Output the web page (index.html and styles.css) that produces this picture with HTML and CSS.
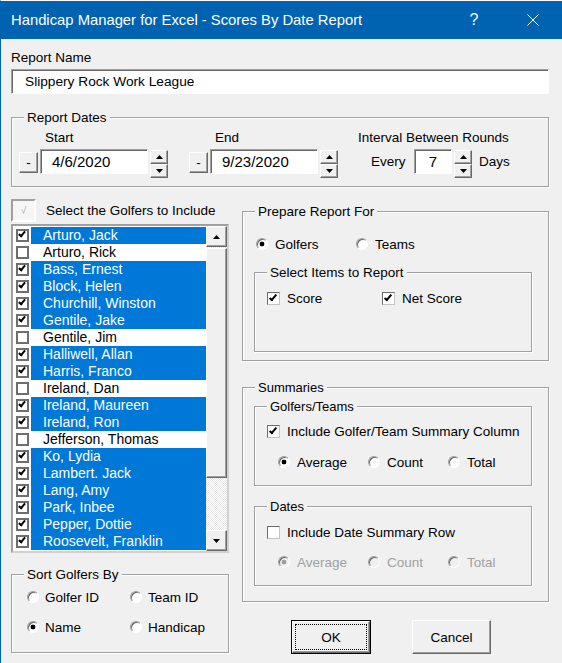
FILE: index.html
```html
<!DOCTYPE html>
<html lang="en">
<head>
    <meta charset="UTF-8">
    <title>Handicap Manager for Excel - Scores By Date Report</title>
    <link rel="stylesheet" href="styles.css">
</head>
<body>
<div class="window">
    <div class="titlebar">
        <span class="title">Handicap Manager for Excel - Scores By Date Report</span>
        <span class="help">?</span>
        <span class="close"><svg width="12" height="12" viewBox="0 0 12 12"><path d="M0.5 0.5L11.5 11.5M11.5 0.5L0.5 11.5" stroke="#fff" stroke-width="1"/></svg></span>
    </div>

    <div class="content">
        <div class="lbl">Report Name</div>
        <div class="textbox name-box">Slippery Rock Work League</div>

        <div class="group dates">
            <div class="group-title">Report Dates</div>
            <div class="dates-row">
                <div class="date-col">
                    <div class="col-lbl">Start</div>
                    <div class="ctl-row">
                        <span class="raised btn-min">-</span>
                        <span class="textbox date-box">4/6/2020</span>
                        <span class="spin">
                            <span class="raised spin-btn"><svg width="7" height="4" viewBox="0 0 7 4"><path d="M3.5 0L7 4H0z"/></svg></span>
                            <span class="raised spin-btn"><svg width="7" height="4" viewBox="0 0 7 4"><path d="M0 0H7L3.5 4z"/></svg></span>
                        </span>
                    </div>
                </div>
                <div class="date-col col-end">
                    <div class="col-lbl">End</div>
                    <div class="ctl-row">
                        <span class="raised btn-min">-</span>
                        <span class="textbox date-box">9/23/2020</span>
                        <span class="spin">
                            <span class="raised spin-btn"><svg width="7" height="4" viewBox="0 0 7 4"><path d="M3.5 0L7 4H0z"/></svg></span>
                            <span class="raised spin-btn"><svg width="7" height="4" viewBox="0 0 7 4"><path d="M0 0H7L3.5 4z"/></svg></span>
                        </span>
                    </div>
                </div>
                <div class="col-interval">
                    <div class="col-lbl">Interval Between Rounds</div>
                    <div class="ctl-row">
                        <span class="every">Every</span>
                        <span class="textbox num-box">7</span>
                        <span class="spin">
                            <span class="raised spin-btn"><svg width="7" height="4" viewBox="0 0 7 4"><path d="M3.5 0L7 4H0z"/></svg></span>
                            <span class="raised spin-btn"><svg width="7" height="4" viewBox="0 0 7 4"><path d="M0 0H7L3.5 4z"/></svg></span>
                        </span>
                        <span class="days">Days</span>
                    </div>
                </div>
            </div>
        </div>

        <div class="main">
            <div class="left">
                <div class="selall">
                    <span class="selall-box">&radic;</span>
                    <span class="selall-lbl">Select the Golfers to Include</span>
                </div>
                <div class="listbox">
                    <div class="items" id="golferList"></div>
                    <div class="scrollbar">
                        <div class="raised sb-btn"><svg width="7" height="4" viewBox="0 0 7 4"><path d="M3.5 0L7 4H0z"/></svg></div>
                        <div class="raised sb-thumb"></div>
                        <div class="sb-track"></div>
                        <div class="raised sb-btn"><svg width="7" height="4" viewBox="0 0 7 4"><path d="M0 0H7L3.5 4z"/></svg></div>
                    </div>
                </div>

                <div class="group sort">
                    <div class="group-title">Sort Golfers By</div>
                    <div class="radio-row sort-row1">
                        <span class="opt w103"><span class="radio"></span>Golfer ID</span>
                        <span class="opt"><span class="radio"></span>Team ID</span>
                    </div>
                    <div class="radio-row sort-row2">
                        <span class="opt w103"><span class="radio on"></span>Name</span>
                        <span class="opt"><span class="radio"></span>Handicap</span>
                    </div>
                </div>
            </div>

            <div class="right">
                <div class="group prepare">
                    <div class="group-title">Prepare Report For</div>
                    <div class="radio-row for-row">
                        <span class="opt w100"><span class="radio on"></span>Golfers</span>
                        <span class="opt"><span class="radio"></span>Teams</span>
                    </div>
                    <div class="group subgroup select-items">
                        <div class="group-title">Select Items to Report</div>
                        <div class="check-row">
                            <span class="opt w115"><span class="check on"></span>Score</span>
                            <span class="opt"><span class="check on"></span>Net Score</span>
                        </div>
                    </div>
                </div>

                <div class="group summaries">
                    <div class="group-title small">Summaries</div>
                    <div class="group subgroup gt">
                        <div class="group-title small">Golfers/Teams</div>
                        <div class="check-row">
                            <span class="opt"><span class="check on"></span>Include Golfer/Team Summary Column</span>
                        </div>
                        <div class="radio-row sum-radios">
                            <span class="opt w90"><span class="radio on"></span>Average</span>
                            <span class="opt w80"><span class="radio"></span>Count</span>
                            <span class="opt"><span class="radio"></span>Total</span>
                        </div>
                    </div>
                    <div class="group subgroup date-sum">
                        <div class="group-title small">Dates</div>
                        <div class="check-row">
                            <span class="opt"><span class="check"></span>Include Date Summary Row</span>
                        </div>
                        <div class="radio-row sum-radios disabled">
                            <span class="opt w90"><span class="radio dis on"></span>Average</span>
                            <span class="opt w80"><span class="radio dis"></span>Count</span>
                            <span class="opt"><span class="radio dis"></span>Total</span>
                        </div>
                    </div>
                </div>

                <div class="buttons">
                    <div class="btn btn-ok"><div class="raised btn-face"><span class="focus">OK</span></div></div>
                    <div class="raised btn btn-cancel">Cancel</div>
                </div>
            </div>
        </div>
    </div>
</div>

<script>
    var golfers = [
        ["Arturo, Jack", true], ["Arturo, Rick", false], ["Bass, Ernest", true],
        ["Block, Helen", true], ["Churchill, Winston", true], ["Gentile, Jake", true],
        ["Gentile, Jim", false], ["Halliwell, Allan", true], ["Harris, Franco", true],
        ["Ireland, Dan", false], ["Ireland, Maureen", true], ["Ireland, Ron", true],
        ["Jefferson, Thomas", false], ["Ko, Lydia", true], ["Lambert. Jack", true],
        ["Lang, Amy", true], ["Park, Inbee", true], ["Pepper, Dottie", true],
        ["Roosevelt, Franklin", true]
    ];

    var list = document.getElementById("golferList");
    golfers.forEach(function (g) {
        var row = `<div class="item${g[1] ? " on" : ""}">
            <span class="item-cb"><span class="list-check"></span></span>
            <span class="item-name">${g[0]}</span>
        </div>`;
        list.innerHTML += row;
    });
</script>
</body>
</html>
```

FILE: styles.css
```css
body {
    margin: 0;
    font-family: "Liberation Sans", Arial, sans-serif;
    font-size: 13.5px;
    color: #000;
    background: #f0f0f0;
}
.window {
    width: 562px;
    height: 663px;
    box-sizing: border-box;
    border-left: 1px solid #0063b1;
    border-top: 1px solid #fafafa;
    background: #f0f0f0;
    overflow: hidden;
}

/* title bar */
.titlebar {
    height: 38px;
    background: #0063b1;
    color: #fff;
    display: flex;
    align-items: center;
}
.title {
    padding-left: 10px;
    font-size: 14.8px;
}
.help {
    margin-left: auto;
    width: 46px;
    text-align: center;
    font-size: 16px;
}
.close {
    width: 46px;
    margin-left: 13px;
    margin-right: 6px;
    display: flex;
    justify-content: center;
}

.content {
    padding: 10px 13px 0 10px;
}
.lbl { line-height: 17px; }

/* 3d bits */
.textbox {
    display: block;
    box-sizing: border-box;
    background: #fff;
    border: 1px solid;
    border-color: #a0a0a0 #fff #fff #a0a0a0;
    box-shadow: inset 1px 1px 0 #696969;
}
.raised {
    box-sizing: border-box;
    background: #f0f0f0;
    border: 1px solid;
    border-color: #fff #696969 #696969 #fff;
    box-shadow: inset -1px -1px 0 #a0a0a0;
}
.name-box {
    margin-top: 3px;
    height: 25px;
    padding-left: 13px;
    line-height: 23px;
    font-size: 13.7px;
}

/* group boxes */
.group {
    box-sizing: border-box;
    border: 1px solid #a0a0a0;
    box-shadow: 1px 1px 0 #fff, inset 1px 1px 0 #fff;
}
.group-title {
    width: fit-content;
    margin: -8px 0 0 12px;
    padding: 0 3px;
    line-height: 15px;
    background: #f0f0f0;
}
.group-title.small { font-size: 13px; }

/* report dates */
.dates {
    margin-top: 23px;
    height: 70px;
}
.dates-row {
    display: flex;
    margin-top: 5px;
    padding-left: 7px;
}
.date-col { width: 149px; }
.col-end { margin-left: 21px; }
.col-interval { margin-left: 20px; }
.col-lbl {
    line-height: 16px;
    padding-left: 26px;
}
.col-interval .col-lbl { padding-left: 0; }
.ctl-row {
    display: flex;
    align-items: flex-start;
    margin-top: 3px;
}
.btn-min {
    width: 19px;
    height: 21px;
    margin-top: 3px;
    display: flex;
    align-items: center;
    justify-content: center;
}
.date-box {
    width: 108px;
    height: 25px;
    margin-left: 2px;
    padding-left: 11px;
    line-height: 23px;
    font-size: 15px;
}
.spin {
    width: 18px;
    margin-left: 2px;
    margin-top: 1px;
    display: flex;
    flex-direction: column;
}
.spin-btn {
    height: 14px;
    display: flex;
    align-items: center;
    justify-content: center;
}
.every {
    width: 43px;
    margin-left: 13px;
    line-height: 25px;
}
.num-box {
    width: 38px;
    height: 25px;
    line-height: 23px;
    text-align: center;
    font-size: 15px;
}
.days {
    margin-left: 7px;
    line-height: 25px;
}

/* main columns */
.main {
    display: flex;
    margin-top: 12px;
}
.left { width: 218px; }
.right {
    width: 307px;
    margin-left: 13px;
}

.selall {
    display: flex;
    align-items: center;
    height: 23px;
}
.selall-box {
    width: 25px;
    height: 23px;
    box-sizing: border-box;
    border: 2px solid;
    border-color: #a0a0a0 #fff #fff #a0a0a0;
    background: #f6f6f6;
    display: flex;
    align-items: center;
    justify-content: center;
    color: #b4a6c6;
    font-size: 10px;
}
.selall-lbl { margin-left: 10px; }

/* golfer list */
.listbox {
    margin-top: 2px;
    height: 329px;
    box-sizing: border-box;
    border: 2px solid;
    border-color: #a0a0a0 #d0d0d0 #d0d0d0 #a0a0a0;
    background: #fff;
    display: flex;
}
.items {
    flex: 1;
    padding-top: 1px;
    overflow: hidden;
}
.item {
    display: flex;
    height: 17px;
}
.item-cb {
    width: 18px;
    display: flex;
    align-items: center;
}
.list-check {
    position: relative;
    width: 13px;
    height: 13px;
    margin-left: 3px;
    box-sizing: border-box;
    border: 2px solid #6e6e6e;
    background: #fff;
}
.item.on .list-check::after {
    content: "";
    position: absolute;
    left: 2px;
    top: -1px;
    width: 2px;
    height: 5px;
    border: solid #000;
    border-width: 0 2px 2px 0;
    transform: rotate(40deg);
}
.item-name {
    flex: 1;
    padding-left: 12px;
    line-height: 17px;
    font-size: 14px;
    white-space: nowrap;
}
.item.on .item-name {
    background: #0078d7;
    color: #fff;
}
.scrollbar {
    width: 21px;
    display: flex;
    flex-direction: column;
    background: repeating-conic-gradient(#fff 0 25%, #e6e6e6 0 50%) 0 0 / 2px 2px;
}
.sb-btn {
    height: 21px;
    display: flex;
    align-items: center;
    justify-content: center;
}
.sb-thumb {
    height: 230px;
    margin-top: 1px;
}
.sb-track { flex: 1; }

/* options */
.radio-row, .check-row {
    display: flex;
    align-items: center;
}
.opt {
    display: flex;
    align-items: center;
    white-space: nowrap;
}
.w80 { width: 80px; }
.w90 { width: 90px; }
.w100 { width: 100px; }
.w103 { width: 103px; }
.w115 { width: 115px; }
.radio {
    flex: none;
    width: 12px;
    height: 12px;
    margin-right: 7px;
    box-sizing: border-box;
    border-radius: 50%;
    border: 1px solid;
    border-color: #a0a0a0 #fff #fff #a0a0a0;
    background: #fff;
    box-shadow: inset 1px 1px 0 #696969;
}
.radio.on { background: radial-gradient(circle, #000 0 2.1px, #fff 2.7px); }
.radio.dis { background: #f0f0f0; }
.radio.dis.on { background: radial-gradient(circle, #a0a0a0 0 2.1px, #f0f0f0 2.7px); }
.check {
    position: relative;
    flex: none;
    width: 13px;
    height: 13px;
    margin-right: 7px;
    box-sizing: border-box;
    border: 1px solid;
    border-color: #6d6d6d #c4c4c4 #c4c4c4 #6d6d6d;
    background: #fff;
}
.check.on::after {
    content: "";
    position: absolute;
    left: 3px;
    top: 0;
    width: 2px;
    height: 6px;
    border: solid #000;
    border-width: 0 2px 2px 0;
    transform: rotate(40deg);
}
.disabled { color: #a0a0a0; }

/* sort */
.sort {
    margin-top: 21px;
    height: 79px;
}
.sort .radio-row {
    height: 20px;
    padding-left: 15px;
}
.sort .radio { margin-right: 6px; }
.sort-row1 { margin-top: 5px; }
.sort-row2 { margin-top: 10px; }

/* prepare */
.prepare {
    margin-top: 12px;
    height: 150px;
}
.for-row {
    margin-top: 16px;
    height: 18px;
    padding-left: 13px;
}
.subgroup {
    margin-left: 11px;
    width: 278px;
    height: 80px;
}
.check-row {
    height: 16px;
    padding-left: 12px;
}
.select-items { margin-top: 19px; }
.select-items .check-row { margin-top: 10px; }

/* summaries */
.summaries {
    margin-top: 26px;
    height: 215px;
}
.gt { margin-top: 11px; }
.gt .check-row { margin-top: 9px; }
.gt .sum-radios { margin-top: 14px; }
.date-sum { margin-top: 20px; }
.date-sum .check-row { margin-top: 10px; }
.date-sum .sum-radios { margin-top: 13px; }
.sum-radios {
    height: 18px;
    padding-left: 23px;
}

/* buttons */
.buttons {
    display: flex;
    margin-top: 18px;
}
.btn {
    height: 34px;
    box-sizing: border-box;
    display: flex;
    align-items: center;
    justify-content: center;
}
.btn-ok {
    width: 80px;
    margin-left: 49px;
    border: 1px solid #000;
    align-items: stretch;
}
.btn-face {
    flex: 1;
    display: flex;
    padding: 2px;
}
.focus {
    flex: 1;
    border: 1px dotted #000;
    display: flex;
    align-items: center;
    justify-content: center;
}
.btn-cancel {
    width: 79px;
    margin-left: 41px;
}
```
